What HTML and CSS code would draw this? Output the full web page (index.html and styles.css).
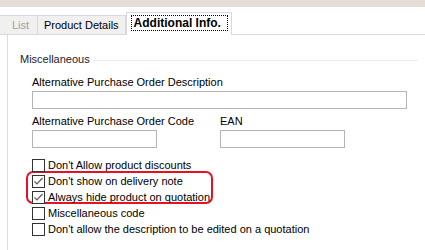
FILE: index.html
```html
<!DOCTYPE html>
<html lang="en">
<head>
  <meta charset="UTF-8">
  <title>Product - Additional Info.</title>
  <link rel="stylesheet" href="styles.css">
</head>
<body>

  <div class="titlebar"></div>

  <div class="tabs">
    <div class="tab tab-disabled">List</div>
    <div class="tab">Product Details</div>
    <div class="tab tab-active"><span class="focus">Additional Info.</span></div>
    <div class="tab-fill"></div>
  </div>

  <div class="panel">
    <div class="group">
      <div class="group-head">
        <span class="group-title">Miscellaneous</span>
        <span class="group-line"></span>
      </div>

      <div class="field">
        <label>Alternative Purchase Order Description</label>
        <input type="text" class="input input-wide">
      </div>

      <div class="field-row">
        <div class="field field-code">
          <label>Alternative Purchase Order Code</label>
          <input type="text" class="input input-short">
        </div>
        <div class="field">
          <label>EAN</label>
          <input type="text" class="input input-short">
        </div>
      </div>

      <div class="checks">
        <div class="check"><span class="box"></span>Don't Allow product discounts</div>
        <div class="highlight">
          <div class="check">
            <span class="box">
              <svg width="11" height="11" viewBox="0 0 11 11"><polyline points="1.5,5.5 4,8 9.5,2" fill="none" stroke="#5a5a5a" stroke-width="1.2"/></svg>
            </span>Don't show on delivery note
          </div>
          <div class="check">
            <span class="box">
              <svg width="11" height="11" viewBox="0 0 11 11"><polyline points="1.5,5.5 4,8 9.5,2" fill="none" stroke="#5a5a5a" stroke-width="1.2"/></svg>
            </span>Always hide product on quotation
          </div>
        </div>
        <div class="check"><span class="box"></span>Miscellaneous code</div>
        <div class="check"><span class="box"></span>Don't allow the description to be edited on a quotation</div>
      </div>
    </div>
  </div>

</body>
</html>
```

FILE: styles.css
```css
* {
  margin: 0;
  padding: 0;
  box-sizing: border-box;
}

body {
  font-family: 'Liberation Sans', Arial, sans-serif;
  font-size: 11px;
  color: #000;
  background-color: #fff;
  overflow: hidden;
}

.titlebar {
  height: 7px;
  background-color: #e7ddd8;
}

/* tab strip */

.tabs {
  display: flex;
  align-items: flex-end;
  margin-top: 5px;
  height: 23px;
}

.tab {
  height: 20px;
  line-height: 18px;
  padding: 0 6px;
  background-color: #f0f0f0;
  border: 1px solid #d9d9d9;
  border-left: none;
  white-space: nowrap;
}

.tab-disabled {
  width: 38px;
  padding: 0 0 0 12px;
  color: #a0a0a0;
}

.tab-active {
  height: 23px;
  width: 106px;
  padding: 2px 3px 0 4px;
  background-color: #fff;
  border-left: 1px solid #d9d9d9;
  border-bottom: none;
  font-size: 12px;
  font-weight: bold;
  line-height: 14px;
}

.focus {
  display: block;
  border: 1px dotted #000;
  padding: 0 2px;
  height: 16px;
}

.tab-fill {
  flex: 1;
  border-bottom: 1px solid #d9d9d9;
}

/* panel and group box */

.panel {
  margin-left: 7px;
  border-left: 1px solid #dcdcdc;
  height: 220px;
}

.group {
  padding: 18px 0 0 12px;
}

.group-head {
  display: flex;
  align-items: center;
  width: 398px;
  color: #1a1a2a;
}

.group-line {
  flex: 1;
  margin: 3px 0 0 3px;
  border-top: 1px solid #ececec;
}

.field {
  display: flex;
  flex-direction: column;
}

.field label {
  line-height: 13px;
  margin-bottom: 2px;
}

.group-head + .field {
  margin: 11px 0 0 12px;
}

.field-row {
  display: flex;
  margin: 6px 0 0 12px;
}

.field-code {
  width: 188px;
}

.input {
  height: 18px;
  border: 1px solid #b4b4b4;
  background-color: #fff;
  outline: none;
}

.input-wide {
  width: 375px;
}

.input-short {
  width: 125px;
}

/* check boxes */

.checks {
  margin: 9px 0 0 12px;
}

.check {
  display: flex;
  align-items: center;
  height: 16px;
  white-space: nowrap;
}

.box {
  width: 13px;
  height: 13px;
  margin-right: 3px;
  border: 1px solid #333;
  background-color: #fff;
  display: flex;
  align-items: center;
  justify-content: center;
}

.highlight {
  width: 187px;
  height: 33px;
  margin: -2px 0 1px -6px;
  padding: 0 0 0 4px;
  border: 2px solid #e81123;
  border-radius: 7px;
}
```
